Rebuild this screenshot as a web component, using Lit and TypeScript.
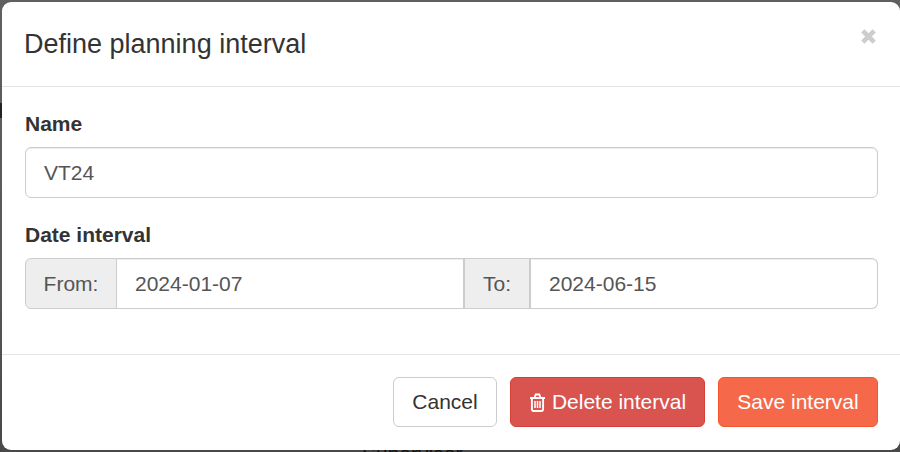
import { LitElement, html, css } from 'lit';
import { customElement } from 'lit/decorators.js';

@customElement('app-root')
export class AppRoot extends LitElement {
  static styles = css`
    :host {
      display: block;
      width: 900px;
      height: 452px;
      overflow: hidden;
      background: linear-gradient(#606060, #585858 60%, #484848);
      font-family: 'Liberation Sans', Arial, sans-serif;
      color: #333;
      position: relative;
    }

    .backdrop-text {
      position: absolute;
      left: 362px;
      top: 444px;
      font-size: 21px;
      line-height: 20px;
      color: #111;
    }

    .backdrop-mark {
      position: absolute;
      left: 0;
      top: 103px;
      width: 2px;
      height: 15px;
      background: #222;
    }

    .modal {
      position: relative;
      box-sizing: border-box;
      width: 898px;
      height: 448px;
      margin: 2px 0 0 2px;
      background: #fff;
      border-radius: 9px;
      display: flex;
      flex-direction: column;
    }

    .modal-header {
      box-sizing: border-box;
      height: 85px;
      flex: none;
      display: flex;
      align-items: center;
      justify-content: space-between;
      padding: 0 22px;
      border-bottom: 1px solid #e5e5e5;
    }

    .modal-title {
      margin: 0;
      font-size: 27px;
      font-weight: 400;
      line-height: 35px;
      color: #333;
    }

    .close {
      margin: 0 1px 16px 0;
      padding: 0;
      border: none;
      background: none;
      display: flex;
    }

    .modal-body {
      flex: 1;
      padding: 22px 22px 0 23px;
    }

    .form-group {
      margin-bottom: 22px;
    }

    label {
      display: block;
      font-size: 21px;
      font-weight: 700;
      line-height: 30px;
      margin-bottom: 8px;
    }

    .form-control {
      box-sizing: border-box;
      height: 51px;
      border: 1px solid #ccc;
      border-radius: 6px;
      padding: 0 18px;
      display: flex;
      align-items: center;
      font-size: 21px;
      color: #555;
      background: #fff;
      box-shadow: inset 0 1px 1px rgba(0, 0, 0, 0.075);
    }

    .input-group {
      display: flex;
    }

    .addon {
      box-sizing: border-box;
      height: 51px;
      flex: none;
      display: flex;
      align-items: center;
      justify-content: center;
      font-size: 21px;
      color: #555;
      background: #eee;
      border: 1px solid #ccc;
    }

    .addon.from {
      width: 92px;
      border-radius: 6px 0 0 6px;
    }

    .addon.to {
      width: 68px;
      border-left: 2px solid #ccc;
      border-right: 2px solid #ccc;
    }

    .input-group .form-control {
      flex: 1;
      min-width: 0;
      border-left: none;
      border-radius: 0;
    }

    .input-group .form-control.first {
      width: 346px;
      flex: none;
      border-right: none;
    }

    .input-group .form-control.last {
      border-radius: 0 6px 6px 0;
    }

    .modal-footer {
      box-sizing: border-box;
      height: 96px;
      flex: none;
      display: flex;
      justify-content: flex-end;
      align-items: flex-start;
      gap: 13px;
      padding: 22px 22px 0 0;
      border-top: 1px solid #e5e5e5;
    }

    .btn {
      box-sizing: border-box;
      height: 50px;
      display: inline-flex;
      align-items: center;
      justify-content: center;
      gap: 5px;
      padding: 0;
      border: 1px solid #ccc;
      border-radius: 6px;
      background: #fff;
      color: #333;
      font-family: inherit;
      font-size: 21px;
    }

    .btn.cancel {
      width: 104px;
    }

    .btn.danger {
      width: 195px;
      background: #d9534f;
      border-color: #d43f3a;
      color: #fff;
    }

    .btn.save {
      width: 160px;
      background: #f5694a;
      border-color: #f4552f;
      color: #fff;
    }
  `;

  render() {
    return html`
      <div class="backdrop-text">Supervisor</div>
      <div class="backdrop-mark"></div>
      <div class="modal">
        <div class="modal-header">
          <h4 class="modal-title">Define planning interval</h4>
          <button class="close" aria-label="Close">
            <svg width="17" height="17" viewBox="0 0 17 17">
              <path d="M2.8 2.8 L14.2 14.2 M14.2 2.8 L2.8 14.2" stroke="#cdcdcd" stroke-width="4.6" fill="none" />
            </svg>
          </button>
        </div>
        <div class="modal-body">
          <div class="form-group">
            <label>Name</label>
            <div class="form-control">VT24</div>
          </div>
          <div class="form-group">
            <label>Date interval</label>
            <div class="input-group">
              <span class="addon from">From:</span>
              <div class="form-control first">2024-01-07</div>
              <span class="addon to">To:</span>
              <div class="form-control last">2024-06-15</div>
            </div>
          </div>
        </div>
        <div class="modal-footer">
          <button class="btn cancel">Cancel</button>
          <button class="btn danger">
            <svg width="18" height="19" viewBox="0 0 18 19" fill="none" stroke="#fff">
              <path d="M1 5 H16" stroke-width="2" />
              <path d="M5.5 4.5 L6.7 1.5 H10.3 L11.5 4.5" stroke-width="1.8" />
              <path d="M2.9 5 V16 Q2.9 18 4.7 18 H12.3 Q14.1 18 14.1 16 V5" stroke-width="1.9" />
              <path d="M6 8 V15 M8.5 8 V15 M11 8 V15" stroke-width="1.5" />
            </svg>
            Delete interval
          </button>
          <button class="btn save">Save interval</button>
        </div>
      </div>
    `;
  }
}

declare global {
  interface HTMLElementTagNameMap {
    'app-root': AppRoot;
  }
}
